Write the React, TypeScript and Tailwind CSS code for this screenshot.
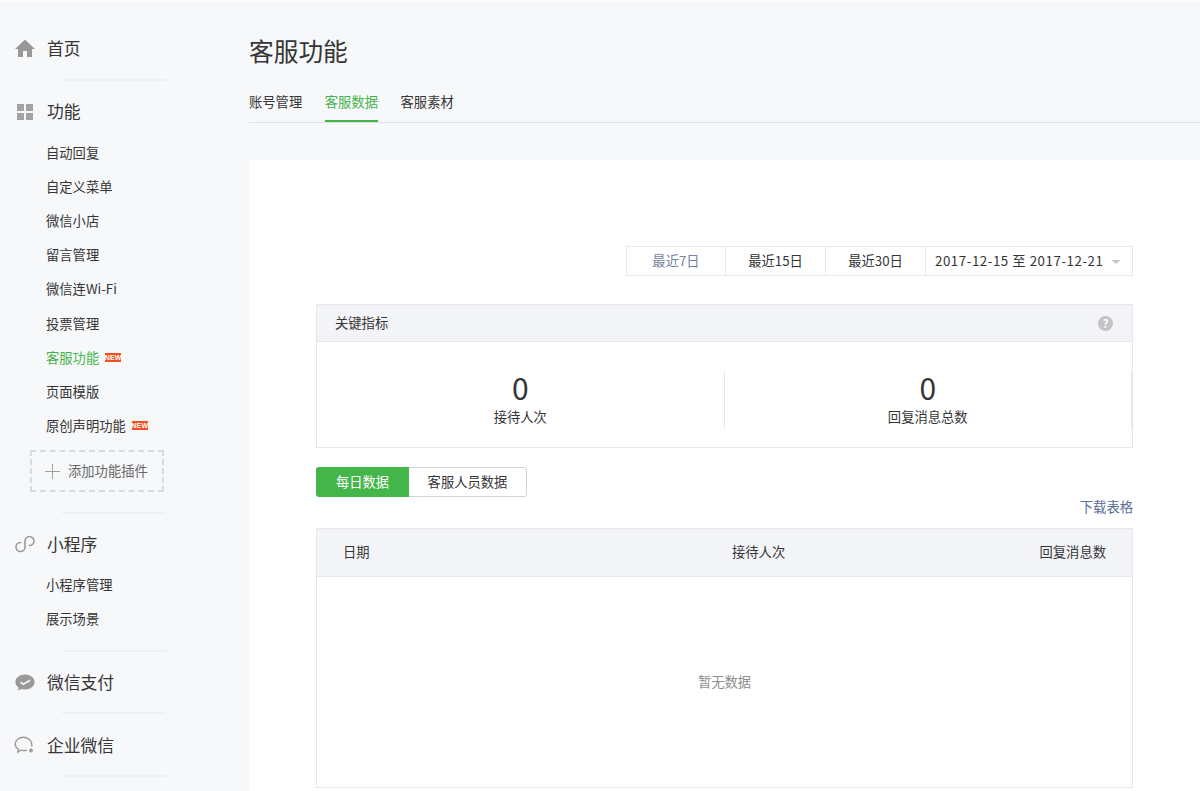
import { ReactNode } from 'react';

const cjk = { fontFamily: '"Noto Sans CJK SC", "Noto Sans", sans-serif' };

function HomeIcon() {
  return (
    <svg width="20" height="20" viewBox="0 0 20 20" fill="#999">
      <path d="M10 .5 0 10h3v8h5v-6h4v6h5v-8h3z" />
    </svg>
  );
}

function GridIcon() {
  return (
    <svg width="18" height="18" viewBox="0 0 18 18" fill="#a3a3a3">
      <rect x="1" y="1" width="7" height="7" />
      <rect x="10" y="1" width="7" height="7" />
      <rect x="1" y="10" width="7" height="7" />
      <rect x="10" y="10" width="7" height="7" />
    </svg>
  );
}

function MiniProgramIcon() {
  return (
    <svg width="20" height="20" viewBox="0 0 20 20" fill="none" stroke="#999" strokeWidth="1.6" strokeLinecap="round">
      <path d="M5.500 7.500A4.500 4.500 0 1 0 10 12V6a4.500 4.500 0 1 1 4.500 4.500" />
    </svg>
  );
}

function PayIcon() {
  return (
    <svg width="20" height="18" viewBox="0 0 20 18">
      <path fill="#999" d="M10 .5C4.700.5.400 3.800.400 8c0 2.300 1.300 4.300 3.300 5.700L3 16.800l3.400-1.900c1.100.400 2.300.600 3.600.600 5.300 0 9.600-3.400 9.600-7.500S15.300.500 10 .500z" />
      <path fill="none" stroke="#f7f8fa" strokeWidth="1.6" d="M5.500 8.200l2.600 2 7-4" />
    </svg>
  );
}

function WorkIcon() {
  return (
    <svg width="22" height="20" viewBox="0 0 22 20" fill="none" stroke="#999" strokeWidth="1.4">
      <path d="M13 14c-1 .4-2.100.6-3.300.6-1 0-2-.1-2.900-.4l-3 1.900.5-2.900C2.300 11.900 1.200 10.100 1.200 8 1.200 4.200 5 1.200 9.500 1.200c4.400 0 7.900 3 8.300 6.800.1.900 0 1.700-.2 2.500" />
      <path d="M15 14.500c1.300 0 1.700-.6 2-1.800.3 1.200.8 1.800 2 1.800-1.200 0-1.700.7-2 1.900-.3-1.200-.7-1.900-2-1.900z" />
    </svg>
  );
}

function NewBadge() {
  return (
    <span className="ml-[6px] inline-flex h-[9px] w-4 items-center justify-center bg-[#f4511e] text-[7px] font-bold leading-none tracking-[0.2px] text-white [font-family:'Liberation_Sans',sans-serif]">
      NEW
    </span>
  );
}

function Divider() {
  return <div className="ml-[62px] h-[2px] w-[104px] bg-[#eff0f3]" />;
}

function SectionTitle({ icon, children }: { icon: ReactNode; children: ReactNode }) {
  return (
    <div className="flex h-11 items-center">
      <div className="flex w-[47px] justify-center pl-[3px]">{icon}</div>
      <span className="text-[16.8px] text-[#353535]">{children}</span>
    </div>
  );
}

function SubItem({ label, active, isNew }: { label: string; active?: boolean; isNew?: boolean }) {
  return (
    <div className={`flex h-[34.1px] items-center pl-[46px] text-[13.3px] ${active ? 'text-[#44b549]' : 'text-[#353535]'}`}>
      {label}
      {isNew && <NewBadge />}
    </div>
  );
}

function Sidebar() {
  return (
    <aside className="w-[249px] shrink-0 pt-[26px]">
      <div className="pb-[8px]">
        <SectionTitle icon={<HomeIcon />}>首页</SectionTitle>
      </div>
      <Divider />
      <div className="pt-[9px]">
        <SectionTitle icon={<GridIcon />}>功能</SectionTitle>
        <div className="mt-[2px]">
          <SubItem label="自动回复" />
          <SubItem label="自定义菜单" />
          <SubItem label="微信小店" />
          <SubItem label="留言管理" />
          <SubItem label="微信连Wi-Fi" />
          <SubItem label="投票管理" />
          <SubItem label="客服功能" active isNew />
          <SubItem label="页面模版" />
          <SubItem label="原创声明功能" isNew />
        </div>
        <div className="mb-[20px] ml-[30px] mt-[7px] flex h-[42px] w-[134px] items-center border-2 border-dashed border-[#d9dadc] pl-[13px] pt-[1px] text-[13.3px] text-[#666]">
          <svg width="15" height="15" viewBox="0 0 15 15" stroke="#a0a0a0" strokeWidth="1">
            <path d="M7.500 0v15M0 7.500h15" />
          </svg>
          <span className="ml-[8px]">添加功能插件</span>
        </div>
      </div>
      <Divider />
      <div className="pt-[9px]">
        <SectionTitle icon={<MiniProgramIcon />}>小程序</SectionTitle>
        <div className="mb-[14px] mt-[1px]">
          <SubItem label="小程序管理" />
          <SubItem label="展示场景" />
        </div>
      </div>
      <Divider />
      <div className="pb-[7px] pt-[9px]">
        <SectionTitle icon={<PayIcon />}>微信支付</SectionTitle>
      </div>
      <Divider />
      <div className="pb-[7px] pt-[10px]">
        <SectionTitle icon={<WorkIcon />}>企业微信</SectionTitle>
      </div>
      <Divider />
    </aside>
  );
}

function DateBar() {
  return (
    <div className="flex justify-end">
      <div className="flex h-[30px] w-[507px] items-center border border-[#e7e7eb] text-[13.3px] text-[#353535]">
        <div className="flex h-full w-[99px] items-center justify-center border-r border-[#e7e7eb] text-[#7583a0]">最近7日</div>
        <div className="flex h-full w-[100px] items-center justify-center border-r border-[#e7e7eb]">最近15日</div>
        <div className="flex h-full w-[100px] items-center justify-center border-r border-[#e7e7eb]">最近30日</div>
        <div className="flex h-full flex-1 items-center pl-[9px]">
          <span className="tracking-[0.55px]">2017-12-15 至 2017-12-21</span>
          <span className="ml-[8px] mt-[1px] h-0 w-0 border-x-[5px] border-t-[4px] border-x-transparent border-t-[#c9c9c9]" />
        </div>
      </div>
    </div>
  );
}

function Metric({ value, label }: { value: string; label: string }) {
  return (
    <div className="flex h-[57px] flex-1 flex-col items-center border-r border-[#e7e7eb] text-[#353535]">
      <span className="text-[30px] leading-[32px]">{value}</span>
      <span className="text-[13.3px] leading-[28px]">{label}</span>
    </div>
  );
}

function KeyMetrics() {
  return (
    <div className="mt-[28px] border border-[#e7e7eb]">
      <div className="flex h-[37px] items-center justify-between border-b border-[#e7e7eb] bg-[#f3f4f8] pl-[18px] pr-[19px] text-[13.3px] text-[#353535]">
        <span>关键指标</span>
        <span className="flex h-[15px] w-[15px] items-center justify-center rounded-full bg-[#c4c4c4] text-[11px] font-bold leading-none text-white">?</span>
      </div>
      <div className="flex h-[105px] items-start pt-[29px]">
        <Metric value="0" label="接待人次" />
        <Metric value="0" label="回复消息总数" />
      </div>
    </div>
  );
}

function DataTabs() {
  return (
    <div className="mt-[19px] flex h-[30px] w-[211px] text-[13.3px]">
      <div className="flex w-[93px] items-center justify-center rounded-l-[3px] bg-[#44b549] text-white">每日数据</div>
      <div className="flex flex-1 items-center justify-center rounded-r-[3px] border border-l-0 border-[#d4d4d8] text-[#353535]">客服人员数据</div>
    </div>
  );
}

function DataTable() {
  return (
    <div className="border border-[#e7e7eb] text-[13.3px] text-[#353535]">
      <div className="grid h-[48px] grid-cols-[389px_1fr_auto] items-center border-b border-[#e7e7eb] bg-[#f3f4f8] px-[26px] pb-[1px]">
        <span>日期</span>
        <span>接待人次</span>
        <span>回复消息数</span>
      </div>
      <div className="flex h-[210px] items-center justify-center text-[#8d8d8d]">暂无数据</div>
    </div>
  );
}

export default function App() {
  return (
    <div className="flex h-[791px] w-[1200px] overflow-hidden border-t border-[#fdfdfe] bg-[#f7f8fa]" style={cjk}>
      <Sidebar />
      <main className="flex-1">
        <h1 className="pt-[31px] text-[24.7px] font-normal leading-[36px] text-[#353535]">客服功能</h1>
        <div className="mt-[16px] flex h-[39px] gap-[22.6px] border-b border-[#e0e1e5] text-[13.3px] text-[#353535]">
          <div className="flex h-[38px] items-center pb-[3px]">账号管理</div>
          <div className="flex h-[38px] items-center border-b-2 border-[#44b549] pb-[1px] text-[#44b549]">客服数据</div>
          <div className="flex h-[38px] items-center pb-[3px]">客服素材</div>
        </div>
        <div className="mt-[37px] h-[640px] bg-white pl-[67px] pr-[67px] pt-[86px]">
          <DateBar />
          <KeyMetrics />
          <DataTabs />
          <div className="flex h-[31px] items-start justify-end text-[13.3px] text-[#576b95]">下载表格</div>
          <DataTable />
        </div>
      </main>
    </div>
  );
}
